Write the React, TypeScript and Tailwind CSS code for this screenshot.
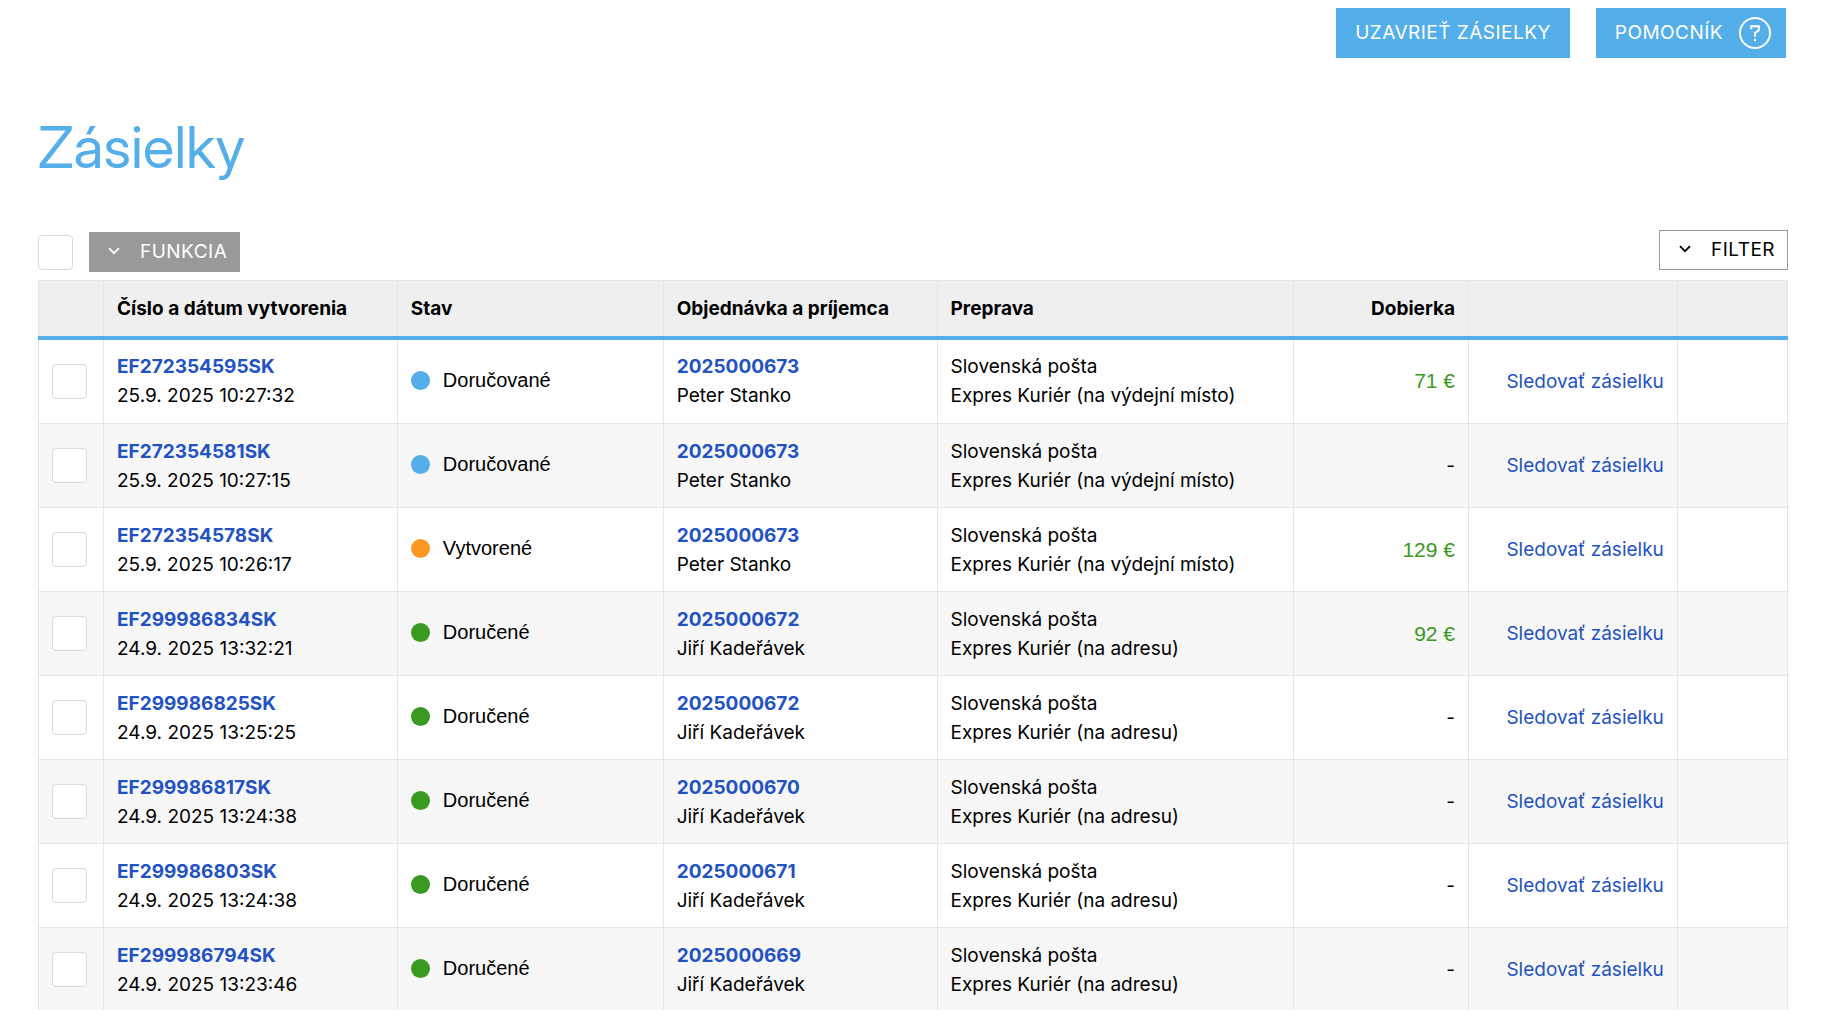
type Status = "Doručované" | "Vytvorené" | "Doručené";

type Shipment = {
  number: string;
  created: string;
  status: Status;
  order: string;
  recipient: string;
  service: string;
  cod?: string;
};

const PICKUP = "Expres Kuriér (na výdejní místo)";
const ADDRESS = "Expres Kuriér (na adresu)";

const shipments: Shipment[] = [
  { number: "EF272354595SK", created: "25.9. 2025 10:27:32", status: "Doručované", order: "2025000673", recipient: "Peter Stanko", service: PICKUP, cod: "71 €" },
  { number: "EF272354581SK", created: "25.9. 2025 10:27:15", status: "Doručované", order: "2025000673", recipient: "Peter Stanko", service: PICKUP },
  { number: "EF272354578SK", created: "25.9. 2025 10:26:17", status: "Vytvorené", order: "2025000673", recipient: "Peter Stanko", service: PICKUP, cod: "129 €" },
  { number: "EF299986834SK", created: "24.9. 2025 13:32:21", status: "Doručené", order: "2025000672", recipient: "Jiří Kadeřávek", service: ADDRESS, cod: "92 €" },
  { number: "EF299986825SK", created: "24.9. 2025 13:25:25", status: "Doručené", order: "2025000672", recipient: "Jiří Kadeřávek", service: ADDRESS },
  { number: "EF299986817SK", created: "24.9. 2025 13:24:38", status: "Doručené", order: "2025000670", recipient: "Jiří Kadeřávek", service: ADDRESS },
  { number: "EF299986803SK", created: "24.9. 2025 13:24:38", status: "Doručené", order: "2025000671", recipient: "Jiří Kadeřávek", service: ADDRESS },
  { number: "EF299986794SK", created: "24.9. 2025 13:23:46", status: "Doručené", order: "2025000669", recipient: "Jiří Kadeřávek", service: ADDRESS },
];

const dotColor: Record<Status, string> = {
  "Doručované": "bg-[#54aeea]",
  "Vytvorené": "bg-[#ff9822]",
  "Doručené": "bg-[#3a9920]",
};

function Checkbox({ label }: { label: string }) {
  return (
    <input
      type="checkbox"
      aria-label={label}
      className="block size-[35px] shrink-0 appearance-none rounded border border-[#d9d9d9] bg-white checked:bg-[#54aeea]"
    />
  );
}

function Chevron() {
  return (
    <svg viewBox="0 0 12 8" className="h-2 w-3" fill="none" stroke="currentColor" strokeWidth="1.8" aria-hidden="true">
      <path d="M1 1.2 6 6.2 11 1.2" />
    </svg>
  );
}

function HelpIcon() {
  return (
    <svg viewBox="0 0 32 32" className="size-8" fill="none" stroke="currentColor" strokeWidth="2" aria-hidden="true">
      <circle cx="16" cy="16" r="15" />
      <path d="M12.2 12.2V9.2H19.8V13.2L16 16V19.8" />
      <path d="M16 21.8V24.2" />
    </svg>
  );
}

const headCell = "border border-[#e5e5e5] border-b-4 border-b-[#54aeea] px-[13px] font-bold";
const cell = "border border-[#e5e5e5] px-[13px]";

function Row({ s }: { s: Shipment }) {
  return (
    <tr className="h-[84px] first:h-[86px] even:bg-[#f7f7f7]">
      <td className={cell}>
        <Checkbox label={`Vybrať ${s.number}`} />
      </td>
      <td className={cell}>
        <a href="#" className="block font-bold text-[#2352c2]">{s.number}</a>
        <span className="block">{s.created}</span>
      </td>
      <td className={`${cell} pb-0.5`}>
        <span className="flex items-center gap-[13px] font-['Liberation_Sans',sans-serif] text-[20px]">
          <span className={`size-[19px] rounded-full ${dotColor[s.status]}`} />
          {s.status}
        </span>
      </td>
      <td className={cell}>
        <a href="#" className="block font-bold text-[#2352c2]">{s.order}</a>
        <span className="block">{s.recipient}</span>
      </td>
      <td className={cell}>
        <span className="block">Slovenská pošta</span>
        <span className="block">{s.service}</span>
      </td>
      <td className={`${cell} text-right`}>
        {s.cod ? (
          <span className="font-['Liberation_Sans',sans-serif] text-[21px] text-[#3a9920]">{s.cod}</span>
        ) : (
          "-"
        )}
      </td>
      <td className={`${cell} text-right`}>
        <a href="#" className="text-[#2352c2]">Sledovať zásielku</a>
      </td>
      <td className={cell} />
    </tr>
  );
}

export default function App() {
  return (
    <div className="h-screen overflow-hidden bg-white pr-[35px] pl-[38px] font-['Inter',sans-serif] text-[19px] leading-[29px] text-black">
      <header className="flex justify-end gap-[26px] pt-2 pr-0.5 text-white">
        <button className="h-[50px] bg-[#54aeea] px-[19px] pb-0.5 tracking-wide">UZAVRIEŤ ZÁSIELKY</button>
        <button className="flex h-[50px] items-center gap-4 bg-[#54aeea] pr-[15px] pl-[19px] tracking-wide">
          <span className="pb-0.5">POMOCNÍK</span>
          <HelpIcon />
        </button>
      </header>

      <main>
        <h1 className="pt-[52px] font-['Inter_Display','Inter',sans-serif] text-[58px] leading-[74px] font-normal text-[#54aeea]">Zásielky</h1>

        <div className="mt-[46px] flex items-start justify-between pb-2">
          <div className="flex items-center gap-4 pt-0.5">
            <Checkbox label="Vybrať všetko" />
            <button className="flex h-10 items-center gap-5 bg-[#999] pr-[13px] pb-0.5 pl-[19px] tracking-wide text-white">
              <Chevron />
              FUNKCIA
            </button>
          </div>
          <button className="flex h-10 items-center gap-5 border border-[#999] pr-3 pb-0.5 pl-[19px] tracking-wide">
            <Chevron />
            FILTER
          </button>
        </div>

        <table className="w-full table-fixed border-collapse">
          <colgroup>
            <col className="w-[65px]" />
            <col className="w-[16.8%]" />
            <col className="w-[15.2%]" />
            <col className="w-[15.66%]" />
            <col />
            <col className="w-[10%]" />
            <col className="w-[11.94%]" />
            <col className="w-[6.3%]" />
          </colgroup>
          <thead>
            <tr className="h-[57px] bg-[#efefef] text-left">
              <th className={headCell} />
              <th className={headCell}>Číslo a dátum vytvorenia</th>
              <th className={headCell}>Stav</th>
              <th className={headCell}>Objednávka a príjemca</th>
              <th className={headCell}>Preprava</th>
              <th className={`${headCell} text-right`}>Dobierka</th>
              <th className={headCell} />
              <th className={headCell} />
            </tr>
          </thead>
          <tbody>
            {shipments.map((s) => (
              <Row key={s.number} s={s} />
            ))}
          </tbody>
        </table>
      </main>
    </div>
  );
}
